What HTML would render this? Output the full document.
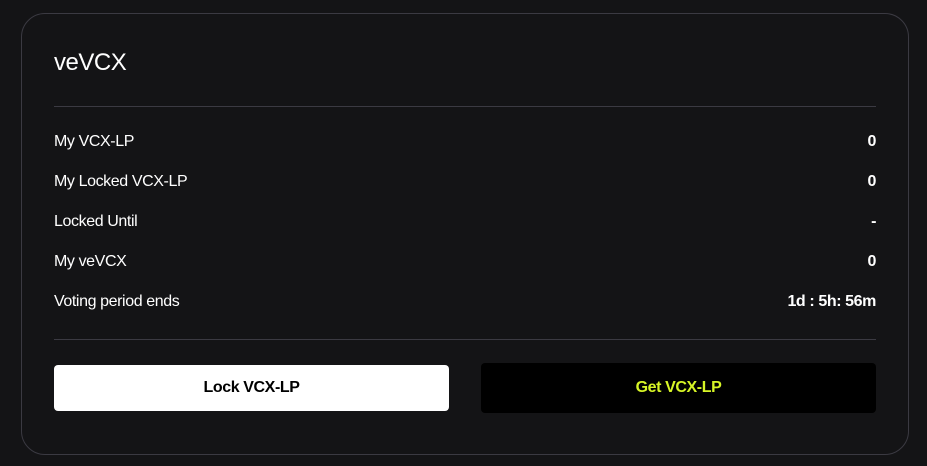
<!DOCTYPE html><html><head><style>
body{margin:0;width:927px;height:466px;background:#141416;font-family:"Liberation Sans",sans-serif;color:#fff;overflow:hidden;position:relative}
.card{position:absolute;left:21px;top:13px;width:886px;height:440px;border:1px solid #3b3a42;border-radius:24px;box-sizing:content-box}
h1{position:absolute;left:54px;top:49px;margin:0;font-size:24px;font-weight:400;letter-spacing:-0.5px}
.hr{position:absolute;left:54px;width:822px;height:1px;background:#3b3a42}
.row{position:absolute;left:54px;width:822px;font-size:16px;letter-spacing:-0.4px;display:flex;justify-content:space-between;line-height:20px}
.row b{font-weight:700}
.btn{position:absolute;display:flex;align-items:center;justify-content:center;font-size:16px;font-weight:700;letter-spacing:-0.4px;border-radius:4px}
</style></head><body>
<div class="card"></div>
<h1>veVCX</h1>
<div class="hr" style="top:106px"></div>
<div class="row" style="top:132px"><span>My VCX-LP</span><b>0</b></div>
<div class="row" style="top:172px"><span>My Locked VCX-LP</span><b>0</b></div>
<div class="row" style="top:212px"><span>Locked Until</span><b>-</b></div>
<div class="row" style="top:252px"><span>My veVCX</span><b>0</b></div>
<div class="row" style="top:292px"><span>Voting period ends</span><b>1d : 5h: 56m</b></div>
<div class="hr" style="top:339px"></div>
<div class="btn" style="left:54px;top:365px;width:395px;height:46px;background:#fff;color:#000">Lock VCX-LP</div>
<div class="btn" style="left:481px;top:363px;width:395px;height:50px;background:#000;color:#d7f526">Get VCX-LP</div>
</body></html>
